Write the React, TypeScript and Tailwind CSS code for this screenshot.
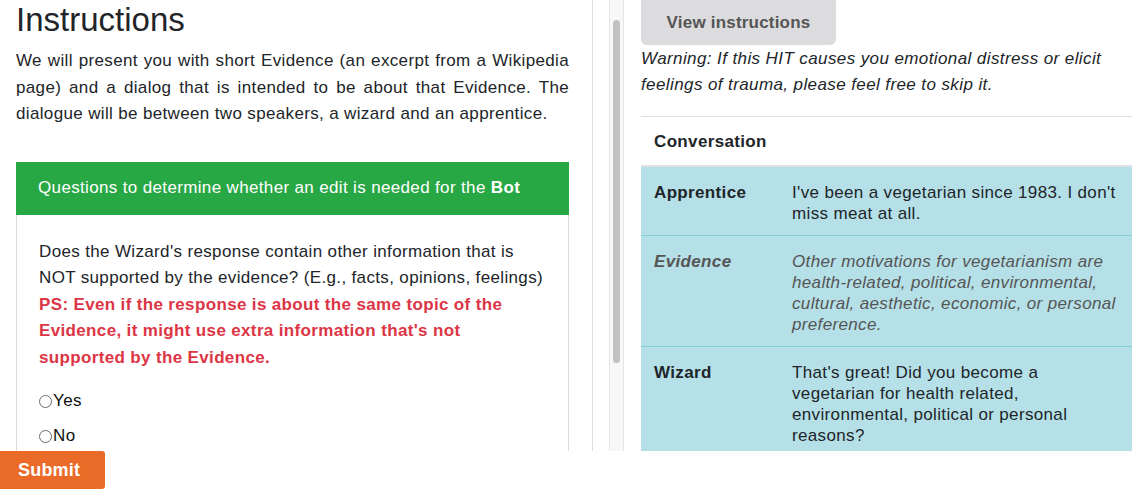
import React from "react";

const font = { fontFamily: '"Liberation Sans", Arial, sans-serif' };

const Radio = ({ label }: { label: string }) => (
  <label className="flex items-center h-[24px] text-[17px] tracking-[0.35px] text-[#111]">
    <span className="inline-block w-[13px] h-[13px] rounded-full border border-[#6b6b6b] bg-white mr-[1px]" />
    {label}
  </label>
);

const Row = ({
  who,
  text,
  evidence,
}: {
  who: string;
  text: string;
  evidence?: boolean;
}) => (
  <div
    className={`grid grid-cols-[151px_1fr] border-b border-[#86cfda] bg-[#b5e0e7] text-[17px] tracking-[0.35px] leading-[21px] ${
      evidence ? "italic text-[#555]" : "text-[#212529]"
    }`}
  >
    <div className="px-[13px] pt-[15px] pb-[11px] font-bold">{who}</div>
    <div className="pr-[13px] pt-[15px] pb-[11px]">{text}</div>
  </div>
);

export default function App() {
  return (
    <div className="w-[1137px] h-[491px] bg-white overflow-hidden" style={font}>
      <div className="flex h-[451px] overflow-hidden">
        {/* left column */}
        <div className="w-[593px] shrink-0 border-r border-[#dedede] pl-4 pr-[23px]">
          <h1 className="text-[33px] leading-[36px] font-medium text-[#212529] pt-[2px]">
            Instructions
          </h1>
          <p className="mt-[10px] text-[17px] tracking-[0.35px] leading-[26.5px] text-[#212529] text-justify">
            We will present you with short Evidence (an excerpt from a Wikipedia
            page) and a dialog that is intended to be about that Evidence. The
            dialogue will be between two speakers, a wizard and an apprentice.
          </p>

          <div className="mt-[34px]">
            <div className="h-[53px] bg-[#28a745] text-white text-[17px] tracking-[0.35px] flex items-center px-[22px]">
              <span>
                Questions to determine whether an edit is needed for the{" "}
                <b>Bot</b>
              </span>
            </div>
            <div className="border-x border-[#dcdcdc] h-[300px] px-[22px] pt-[24px]">
              <p className="text-[17px] tracking-[0.35px] leading-[26.5px] text-[#212529]">
                Does the Wizard's response contain other information that is
                NOT supported by the evidence? (E.g., facts, opinions, feelings)
                <br />
                <span className="font-bold text-[#dc3545]">
                  PS: Even if the response is about the same topic of the
                  Evidence, it might use extra information that's not supported
                  by the Evidence.
                </span>
              </p>
              <div className="mt-[18px] flex flex-col gap-[11px]">
                <Radio label="Yes" />
                <Radio label="No" />
              </div>
            </div>
          </div>
        </div>

        {/* scrollbar */}
        <div className="w-[16px] shrink-0" />
        <div className="w-[15px] shrink-0 border-x border-[#e6e6e6] bg-[#f8f8f8]">
          <div className="mt-[20px] ml-[3px] w-[7px] h-[343px] rounded-full bg-[#c1c1c1]" />
        </div>

        {/* right column */}
        <div className="flex-1 pl-[17px] pr-[5px]">
          <button className="w-[195px] h-[45px] rounded-b-[6px] bg-[#dcdcde] text-[#555] font-bold text-[17px] tracking-[0.2px]">
            View instructions
          </button>
          <p className="mt-[1px] text-[17px] tracking-[0.4px] leading-[26px] italic text-[#212529] pr-[20px]">
            Warning: If this HIT causes you emotional distress or elicit
            feelings of trauma, please feel free to skip it.
          </p>
          <div className="mt-[18px] border-t border-[#dee2e6]">
            <div className="px-[13px] pt-[13px] pb-[11px] text-[17px] tracking-[0.35px] leading-[24px] font-bold text-[#212529]">
              Conversation
            </div>
            <div className="border-t-2 border-[#dee2e6]">
              <Row
                who="Apprentice"
                text="I've been a vegetarian since 1983. I don't miss meat at all."
              />
              <Row
                who="Evidence"
                evidence
                text="Other motivations for vegetarianism are health-related, political, environmental, cultural, aesthetic, economic, or personal preference."
              />
              <Row
                who="Wizard"
                text="That's great! Did you become a vegetarian for health related, environmental, political or personal reasons?"
              />
            </div>
          </div>
        </div>
      </div>

      <div className="h-[40px]">
        <button className="w-[105px] h-[38px] bg-[#ea6b27] rounded-r-[3px] text-white font-bold text-[18px] tracking-[0.2px] text-left pl-[18px]">
          Submit
        </button>
      </div>
    </div>
  );
}
